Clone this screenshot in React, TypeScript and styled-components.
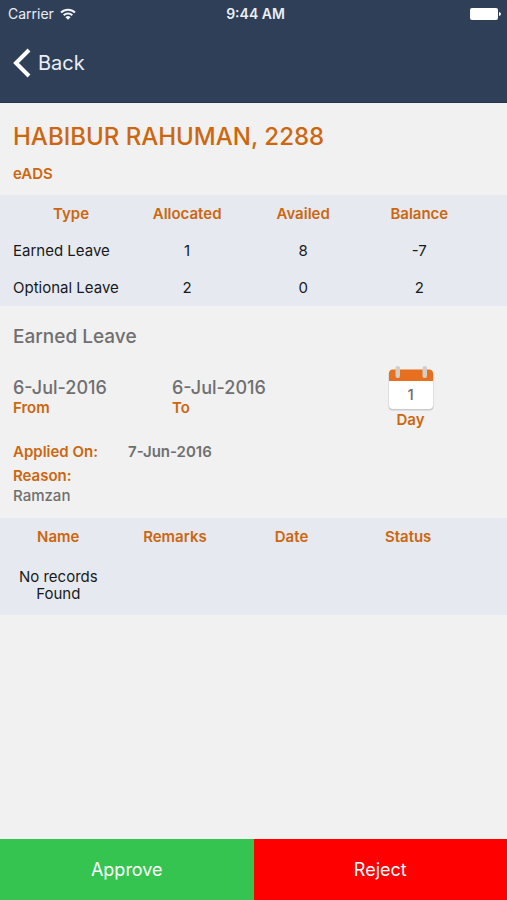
import React from "react";
import styled, { createGlobalStyle } from "styled-components";

const GlobalStyle = createGlobalStyle`
  *, *::before, *::after { box-sizing: border-box; }
  body {
    margin: 0;
    background: #f1f1f1;
    color: #161a20;
    font-family: Inter, "Liberation Sans", sans-serif;
    font-size: 15px;
    line-height: 17px;
  }
`;

const orange = "#cc670f";
const grey = "#6f6f70";

const Screen = styled.div`
  min-height: 100vh;
  display: flex;
  flex-direction: column;
`;

const Header = styled.header`
  background: #303f58;
  border-bottom: 1px solid #26344d;
  color: #e9eef6;
  padding-bottom: 17px;
`;

const StatusBar = styled.div`
  display: grid;
  grid-template-columns: 1fr auto 1fr;
  align-items: center;
  height: 27px;
  padding: 0 6px 0 8px;
  font-size: 14px;
`;

const Carrier = styled.span`
  display: flex;
  align-items: center;
  gap: 6px;
`;

const Clock = styled.time`
  font-weight: 600;
  padding-left: 2px;
`;

const Battery = styled.svg`
  justify-self: end;
  display: block;
`;

const BackButton = styled.button`
  display: flex;
  align-items: center;
  gap: 7px;
  height: 44px;
  margin-top: 14px;
  padding: 0 12px;
  border: 0;
  background: none;
  color: inherit;
  font: inherit;
  font-size: 20px;
  line-height: 24px;
  cursor: pointer;
`;

const Main = styled.main`
  flex: 1;
`;

const Employee = styled.section`
  padding: 18px 13px 13px;
  color: ${orange};
`;

const EmployeeName = styled.h1`
  margin: 0 0 12px;
  font-size: 24px;
  line-height: 32px;
  font-weight: 500;
`;

const Department = styled.p`
  margin: 0;
  font-weight: 600;
`;

const TableBand = styled.section<{ $inset?: boolean }>`
  background: #e6e9f0;
  padding-left: ${(p) => (p.$inset ? "13px" : "0")};
`;

const Table = styled.table<{ $width: string }>`
  width: ${(p) => p.$width};
  table-layout: fixed;
  border-collapse: collapse;
`;

const HeadCell = styled.th`
  height: 37px;
  padding: 0;
  color: ${orange};
  font-weight: 600;
  text-align: center;
`;

const Cell = styled.td<{ $start?: boolean }>`
  height: 37px;
  padding: 0;
  text-align: ${(p) => (p.$start ? "left" : "center")};
`;

const RecordCell = styled.td`
  height: 60px;
  padding: 0 16px;
  text-align: center;
`;

const Details = styled.section`
  padding: 19px 17px 14px 13px;
  font-weight: 600;
  color: ${grey};
`;

const LeaveTitle = styled.h2`
  margin: 0 0 16px;
  font-size: 19px;
  line-height: 24px;
  font-weight: 500;
`;

const Period = styled.div`
  display: grid;
  grid-template-columns: repeat(3, 1fr);
  margin-bottom: 15px;
`;

const DateBlock = styled.div`
  display: flex;
  flex-direction: column;
  padding-top: 12px;
`;

const DateValue = styled.span`
  font-size: 18px;
  line-height: 22px;
  font-weight: 500;
`;

const Label = styled.span`
  color: ${orange};
  font-weight: 600;
`;

const DayBlock = styled.div`
  display: flex;
  flex-direction: column;
  align-items: center;
`;

const Calendar = styled.div`
  position: relative;
  width: 46px;
  height: 46px;
`;

const CalendarArt = styled.svg`
  display: block;
`;

const DayCount = styled.span`
  position: absolute;
  inset: 21px 0 auto;
  text-align: center;
  font-weight: 500;
`;

const Applied = styled.div`
  display: flex;
  margin-bottom: 7px;
`;

const AppliedLabel = styled(Label)`
  width: 115px;
`;

const Reason = styled.div`
  display: flex;
  flex-direction: column;
  gap: 3px;
`;

const ReasonText = styled.span`
  font-weight: 500;
`;

const Actions = styled.footer`
  display: grid;
  grid-template-columns: 1fr 1fr;
`;

const ActionButton = styled.button<{ $color: string }>`
  height: 61px;
  padding: 0;
  border: 0;
  background: ${(p) => p.$color};
  color: #fff;
  font: inherit;
  font-size: 18px;
  line-height: 24px;
  cursor: pointer;
`;

const balances = [
  ["Earned Leave", "1", "8", "-7"],
  ["Optional Leave", "2", "0", "2"],
];

export default function App() {
  return (
    <Screen>
      <GlobalStyle />
      <Header>
        <StatusBar>
          <Carrier>
            Carrier
            <svg width="16" height="12" viewBox="0 0 16 12" aria-hidden="true">
              <g fill="none" stroke="#f1f5fb" strokeWidth="2">
                <path d="M1 4.5a10 10 0 0 1 14 0" />
                <path d="M3.7 7.3a6.1 6.1 0 0 1 8.6 0" />
              </g>
              <path d="M8 11.8 5.4 9.2a3.7 3.7 0 0 1 5.2 0z" fill="#f1f5fb" />
            </svg>
          </Carrier>
          <Clock>9:44 AM</Clock>
          <Battery width="31" height="14" viewBox="0 0 31 14" aria-hidden="true">
            <rect x="0" y="1" width="28" height="12" rx="2" fill="#fff" />
            <path d="M29 5q2 .5 2 2t-2 2z" fill="#fff" />
          </Battery>
        </StatusBar>
        <BackButton type="button">
          <svg width="19" height="30" viewBox="0 0 19 30" aria-hidden="true">
            <path d="M17 2 4 15l13 13" fill="none" stroke="#fff" strokeWidth="4" />
          </svg>
          Back
        </BackButton>
      </Header>

      <Main>
        <Employee>
          <EmployeeName>HABIBUR RAHUMAN, 2288</EmployeeName>
          <Department>eADS</Department>
        </Employee>

        <TableBand $inset>
          <Table $width="94%">
            <thead>
              <tr>
                {["Type", "Allocated", "Availed", "Balance"].map((h) => (
                  <HeadCell key={h} scope="col">{h}</HeadCell>
                ))}
              </tr>
            </thead>
            <tbody>
              {balances.map((row) => (
                <tr key={row[0]}>
                  {row.map((value, i) => (
                    <Cell key={i} $start={i === 0}>{value}</Cell>
                  ))}
                </tr>
              ))}
            </tbody>
          </Table>
        </TableBand>

        <Details>
          <LeaveTitle>Earned Leave</LeaveTitle>
          <Period>
            <DateBlock>
              <DateValue>6-Jul-2016</DateValue>
              <Label>From</Label>
            </DateBlock>
            <DateBlock>
              <DateValue>6-Jul-2016</DateValue>
              <Label>To</Label>
            </DateBlock>
            <DayBlock>
              <Calendar>
                <CalendarArt width="46" height="46" viewBox="0 0 46 46" aria-hidden="true">
                  <rect x="0.5" y="6" width="45" height="39.5" rx="4" fill="#cbcbcb" />
                  <path d="M1 15h44v25a4 4 0 0 1-4 4H5a4 4 0 0 1-4-4z" fill="#fff" />
                  <path d="M1 16V8.500a4 4 0 0 1 4-4h36a4 4 0 0 1 4 4V16z" fill="#e66f20" />
                  <rect x="7.5" y="1" width="4.500" height="12" rx="2" fill="#d3cdc8" />
                  <rect x="34.5" y="1" width="4.500" height="12" rx="2" fill="#d3cdc8" />
                </CalendarArt>
                <DayCount>1</DayCount>
              </Calendar>
              <Label>Day</Label>
            </DayBlock>
          </Period>
          <Applied>
            <AppliedLabel>Applied On:</AppliedLabel>
            <span>7-Jun-2016</span>
          </Applied>
          <Reason>
            <Label>Reason:</Label>
            <ReasonText>Ramzan</ReasonText>
          </Reason>
        </Details>

        <TableBand>
          <Table $width="92%">
            <thead>
              <tr>
                {["Name", "Remarks", "Date", "Status"].map((h) => (
                  <HeadCell key={h} scope="col">{h}</HeadCell>
                ))}
              </tr>
            </thead>
            <tbody>
              <tr>
                <RecordCell>No records Found</RecordCell>
                <RecordCell />
                <RecordCell />
                <RecordCell />
              </tr>
            </tbody>
          </Table>
        </TableBand>
      </Main>

      <Actions>
        <ActionButton type="button" $color="#35c44f">Approve</ActionButton>
        <ActionButton type="button" $color="#ff0000">Reject</ActionButton>
      </Actions>
    </Screen>
  );
}
